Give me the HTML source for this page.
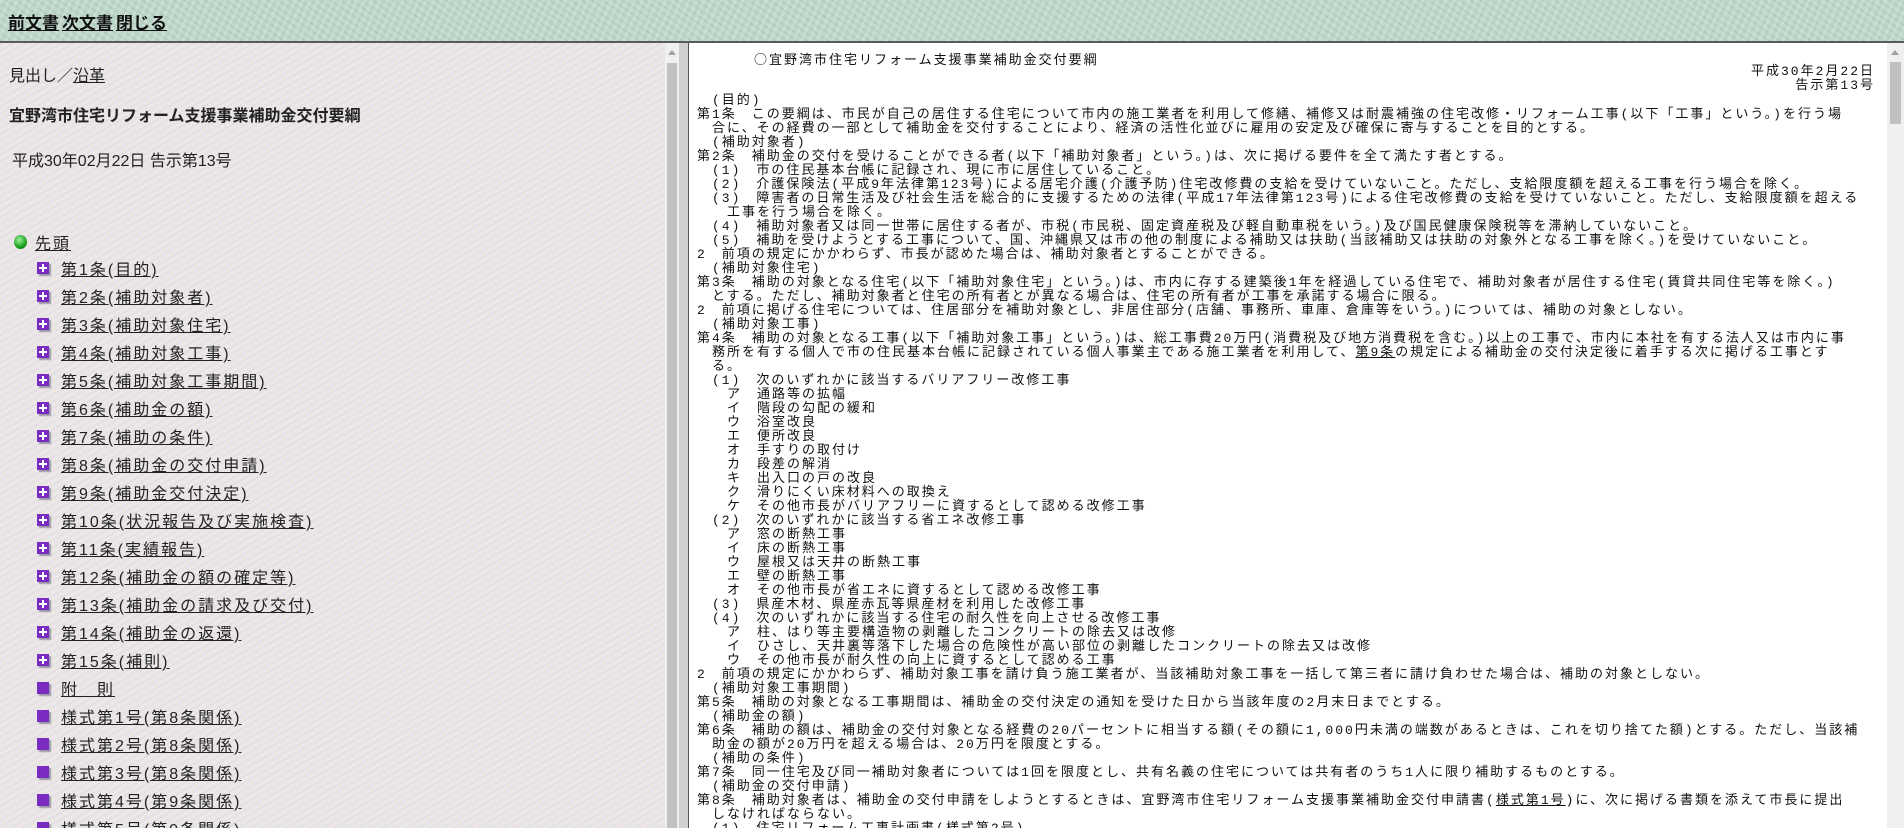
<!DOCTYPE html>
<html><head><meta charset="utf-8">
<style>
html,body{margin:0;padding:0;width:1904px;height:828px;overflow:hidden;}
body{position:relative;font-family:"Liberation Sans","Noto Sans CJK JP",sans-serif;color:#111;}
#top{position:absolute;left:0;top:0;width:1904px;height:41px;background:#bdd6c9;
 background-image:repeating-linear-gradient(115deg,rgba(255,255,255,.18) 0 3px,rgba(0,0,0,0) 3px 7px),repeating-linear-gradient(35deg,rgba(90,130,110,.12) 0 2px,rgba(0,0,0,0) 2px 6px);
 border-bottom:2px solid #5a5a5a;}
#top a{position:absolute;top:9px;font-size:17px;font-weight:bold;color:#111;text-decoration:underline;}
#left{position:absolute;left:0;top:43px;width:668px;height:785px;background:#ebe8eb;
 background-image:repeating-linear-gradient(60deg,rgba(240,225,205,.35) 0 2px,rgba(0,0,0,0) 2px 5px),repeating-linear-gradient(150deg,rgba(210,210,225,.35) 0 2px,rgba(0,0,0,0) 2px 6px);}
.lt{position:absolute;white-space:nowrap;font-size:16px;color:#222;}
.it{position:absolute;left:61px;font-size:16px;letter-spacing:2px;color:#222;text-decoration:underline;white-space:nowrap;}
.pl{position:absolute;left:37px;width:12px;height:12px;background:#7a2cc0;box-shadow:2px 2px 1px #9a98a8;}
.pl:before{content:"";position:absolute;left:2px;top:5px;width:8px;height:2px;background:#fff;}
.pl:after{content:"";position:absolute;left:5px;top:2px;width:2px;height:8px;background:#fff;}
.sq{position:absolute;left:37px;width:12px;height:12px;background:#7a2cc0;box-shadow:2px 2px 1px #9a98a8;}
#lsb{position:absolute;left:665px;top:43px;width:14px;height:785px;background:#f0f0f0;}
#lsb .th{position:absolute;left:2px;top:20px;width:10px;height:765px;background:#c1c1c1;}
#div{position:absolute;left:679px;top:43px;width:9px;height:785px;background:#cfcfcf;border-right:1px solid #555;}
#right{position:absolute;left:690px;top:43px;width:1197px;height:785px;background:#fff;overflow:hidden;}
#rsb{position:absolute;left:1887px;top:43px;width:17px;height:785px;background:#f0f0f0;}
#rsb .th{position:absolute;left:3px;top:19px;width:11px;height:62px;background:#c1c1c1;}
.arr{position:absolute;width:0;height:0;border-left:4px solid transparent;border-right:4px solid transparent;border-bottom:5px solid #a0a0a0;}
pre{margin:0;position:absolute;left:7px;font-family:"Liberation Mono","Noto Sans CJK JP",monospace;font-size:13px;letter-spacing:2px;line-height:14px;color:#111;white-space:pre;}
pre u{text-decoration:underline;}
.cj{font-family:"Noto Sans CJK JP",sans-serif;}
</style></head><body>
<div id="top">
<a style="left:8px">前文書</a><a style="left:62px">次文書</a><a style="left:116px">閉じる</a>
</div>
<div id="left">
<div class="lt" style="left:9px;top:19px">見出し／<u>沿革</u></div>
<div class="lt" style="left:9px;top:59px;font-weight:bold">宜野湾市住宅リフォーム支援事業補助金交付要綱</div>
<div class="lt" style="left:12px;top:104px">平成30年02月22日 告示第13号</div>
<div style="position:absolute;left:14px;top:192px;width:13px;height:14px;border-radius:50%;background:radial-gradient(circle at 40% 35%,#9ef09e,#1aa01a 60%,#0a600a);"></div>
<div class="it" style="left:35px;top:187px">先頭</div>

<div class="pl" style="top:219px"></div><div class="it" style="top:213px">第1条(目的)</div>
<div class="pl" style="top:247px"></div><div class="it" style="top:241px">第2条(補助対象者)</div>
<div class="pl" style="top:275px"></div><div class="it" style="top:269px">第3条(補助対象住宅)</div>
<div class="pl" style="top:303px"></div><div class="it" style="top:297px">第4条(補助対象工事)</div>
<div class="pl" style="top:331px"></div><div class="it" style="top:325px">第5条(補助対象工事期間)</div>
<div class="pl" style="top:359px"></div><div class="it" style="top:353px">第6条(補助金の額)</div>
<div class="pl" style="top:387px"></div><div class="it" style="top:381px">第7条(補助の条件)</div>
<div class="pl" style="top:415px"></div><div class="it" style="top:409px">第8条(補助金の交付申請)</div>
<div class="pl" style="top:443px"></div><div class="it" style="top:437px">第9条(補助金交付決定)</div>
<div class="pl" style="top:471px"></div><div class="it" style="top:465px">第10条(状況報告及び実施検査)</div>
<div class="pl" style="top:499px"></div><div class="it" style="top:493px">第11条(実績報告)</div>
<div class="pl" style="top:527px"></div><div class="it" style="top:521px">第12条(補助金の額の確定等)</div>
<div class="pl" style="top:555px"></div><div class="it" style="top:549px">第13条(補助金の請求及び交付)</div>
<div class="pl" style="top:583px"></div><div class="it" style="top:577px">第14条(補助金の返還)</div>
<div class="pl" style="top:611px"></div><div class="it" style="top:605px">第15条(補則)</div>
<div class="sq" style="top:639px"></div><div class="it" style="top:633px">附　則</div>
<div class="sq" style="top:667px"></div><div class="it" style="top:661px">様式第1号(第8条関係)</div>
<div class="sq" style="top:695px"></div><div class="it" style="top:689px">様式第2号(第8条関係)</div>
<div class="sq" style="top:723px"></div><div class="it" style="top:717px">様式第3号(第8条関係)</div>
<div class="sq" style="top:751px"></div><div class="it" style="top:745px">様式第4号(第9条関係)</div>
<div class="sq" style="top:779px"></div><div class="it" style="top:773px">様式第5号(第9条関係)</div>
</div>
<div id="lsb"><div class="arr" style="left:3px;top:7px"></div><div class="th"></div></div>
<div id="div"></div>
<div id="right">
<pre style="top:9px;left:64px"><span class="cj">○</span>宜野湾市住宅リフォーム支援事業補助金交付要綱</pre>
<pre style="top:22px;left:auto;right:12px;text-align:right">平成30年2月22日
告示第13号</pre>
<pre style="top:51px">　(目的)
第1条　この要綱は、市民が自己の居住する住宅について市内の施工業者を利用して修繕、補修又は耐震補強の住宅改修・リフォーム工事(以下「工事」という。)を行う場
　合に、その経費の一部として補助金を交付することにより、経済の活性化並びに雇用の安定及び確保に寄与することを目的とする。
　(補助対象者)
第2条　補助金の交付を受けることができる者(以下「補助対象者」という。)は、次に掲げる要件を全て満たす者とする。
　(1)　市の住民基本台帳に記録され、現に市に居住していること。
　(2)　介護保険法(平成9年法律第123号)による居宅介護(介護予防)住宅改修費の支給を受けていないこと。ただし、支給限度額を超える工事を行う場合を除く。
　(3)　障害者の日常生活及び社会生活を総合的に支援するための法律(平成17年法律第123号)による住宅改修費の支給を受けていないこと。ただし、支給限度額を超える
　　工事を行う場合を除く。
　(4)　補助対象者又は同一世帯に居住する者が、市税(市民税、固定資産税及び軽自動車税をいう。)及び国民健康保険税等を滞納していないこと。
　(5)　補助を受けようとする工事について、国、沖縄県又は市の他の制度による補助又は扶助(当該補助又は扶助の対象外となる工事を除く。)を受けていないこと。
2　前項の規定にかかわらず、市長が認めた場合は、補助対象者とすることができる。
　(補助対象住宅)
第3条　補助の対象となる住宅(以下「補助対象住宅」という。)は、市内に存する建築後1年を経過している住宅で、補助対象者が居住する住宅(賃貸共同住宅等を除く。)
　とする。ただし、補助対象者と住宅の所有者とが異なる場合は、住宅の所有者が工事を承諾する場合に限る。
2　前項に掲げる住宅については、住居部分を補助対象とし、非居住部分(店舗、事務所、車庫、倉庫等をいう。)については、補助の対象としない。
　(補助対象工事)
第4条　補助の対象となる工事(以下「補助対象工事」という。)は、総工事費20万円(消費税及び地方消費税を含む。)以上の工事で、市内に本社を有する法人又は市内に事
　務所を有する個人で市の住民基本台帳に記録されている個人事業主である施工業者を利用して、<u>第9条</u>の規定による補助金の交付決定後に着手する次に掲げる工事とす
　る。
　(1)　次のいずれかに該当するバリアフリー改修工事
　　ア　通路等の拡幅
　　イ　階段の勾配の緩和
　　ウ　浴室改良
　　エ　便所改良
　　オ　手すりの取付け
　　カ　段差の解消
　　キ　出入口の戸の改良
　　ク　滑りにくい床材料への取換え
　　ケ　その他市長がバリアフリーに資するとして認める改修工事
　(2)　次のいずれかに該当する省エネ改修工事
　　ア　窓の断熱工事
　　イ　床の断熱工事
　　ウ　屋根又は天井の断熱工事
　　エ　壁の断熱工事
　　オ　その他市長が省エネに資するとして認める改修工事
　(3)　県産木材、県産赤瓦等県産材を利用した改修工事
　(4)　次のいずれかに該当する住宅の耐久性を向上させる改修工事
　　ア　柱、はり等主要構造物の剥離したコンクリートの除去又は改修
　　イ　ひさし、天井裏等落下した場合の危険性が高い部位の剥離したコンクリートの除去又は改修
　　ウ　その他市長が耐久性の向上に資するとして認める工事
2　前項の規定にかかわらず、補助対象工事を請け負う施工業者が、当該補助対象工事を一括して第三者に請け負わせた場合は、補助の対象としない。
　(補助対象工事期間)
第5条　補助の対象となる工事期間は、補助金の交付決定の通知を受けた日から当該年度の2月末日までとする。
　(補助金の額)
第6条　補助の額は、補助金の交付対象となる経費の20パーセントに相当する額(その額に1,000円未満の端数があるときは、これを切り捨てた額)とする。ただし、当該補
　助金の額が20万円を超える場合は、20万円を限度とする。
　(補助の条件)
第7条　同一住宅及び同一補助対象者については1回を限度とし、共有名義の住宅については共有者のうち1人に限り補助するものとする。
　(補助金の交付申請)
第8条　補助対象者は、補助金の交付申請をしようとするときは、宜野湾市住宅リフォーム支援事業補助金交付申請書(<u>様式第1号</u>)に、次に掲げる書類を添えて市長に提出
　しなければならない。
　(1)　住宅リフォーム工事計画書(様式第2号)</pre>
</div>
<div id="rsb"><div class="arr" style="left:4px;top:7px"></div><div class="th"></div></div>
</body></html>
